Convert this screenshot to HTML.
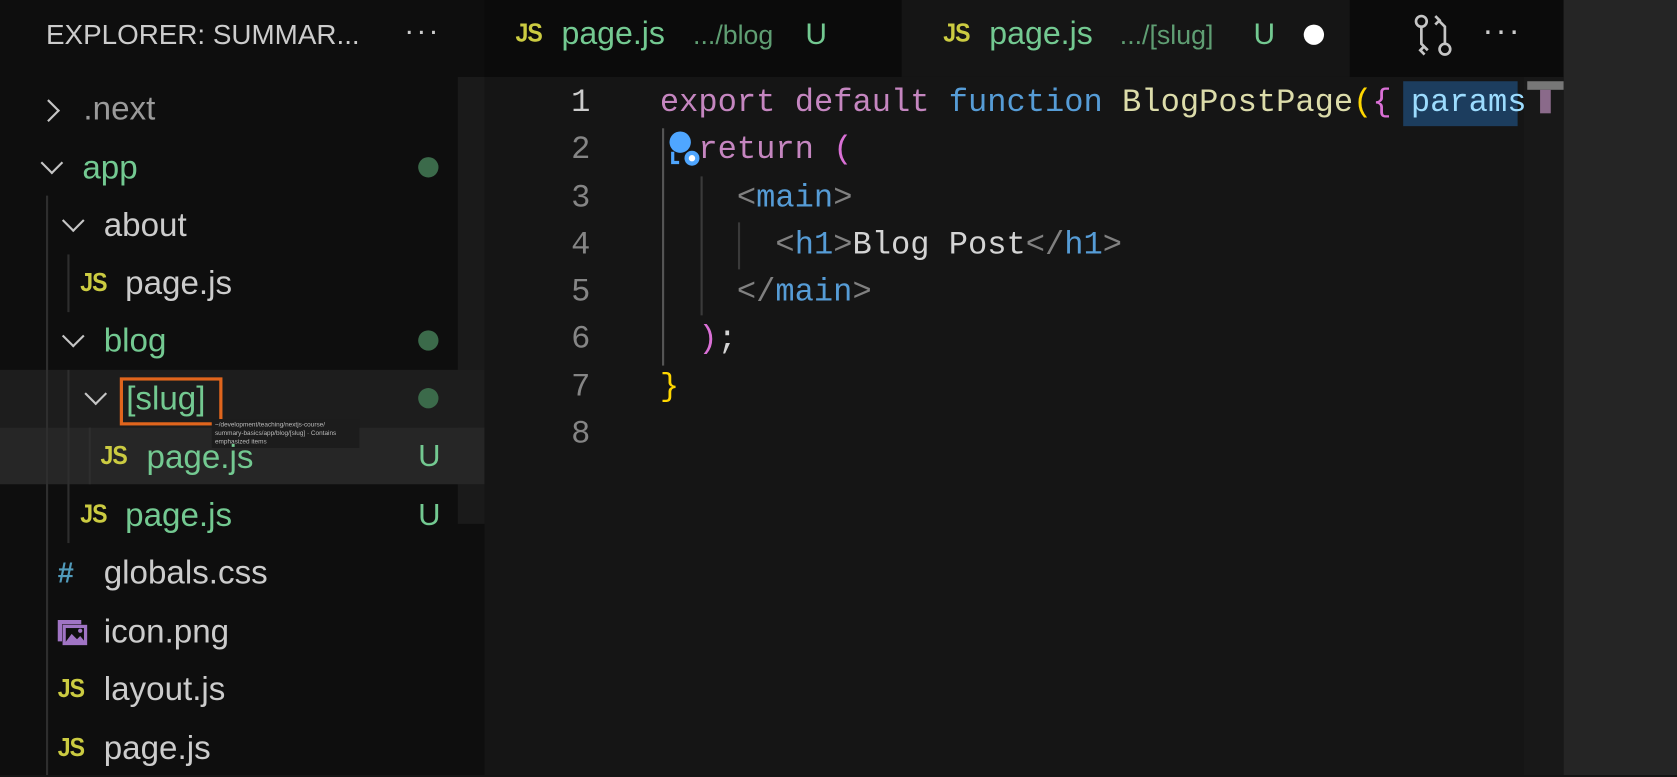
<!DOCTYPE html>
<html><head><meta charset="utf-8"><style>
html,body{margin:0;padding:0;background:#151515;overflow:hidden;width:1677px;height:775px}
#w{position:absolute;left:0;top:0;width:1568px;height:725px;transform:scale(1.0695,1.069);transform-origin:0 0;background:#151515;font-family:"Liberation Sans",sans-serif}
.a{position:absolute}
#side{left:0;top:0;width:453px;height:725px;background:#0e0e0e}
#tabs{left:453px;top:0;width:1009px;height:72px;background:#0b0b0b}
#right{left:1462px;top:0;width:106px;height:725px;background:#252525}
.t{position:absolute;font-size:31px;line-height:54px;white-space:nowrap;color:#cccccc}
.g{color:#73c991}
.js{position:absolute;font-size:24px;font-weight:bold;color:#cbcb41;line-height:54px;letter-spacing:-1px;transform:scaleX(0.9);transform-origin:0 0}
.chev{position:absolute;width:13px;height:13px;border-right:2px solid #c5c5c5;border-bottom:2px solid #c5c5c5}
.dot{position:absolute;width:19px;height:19px;border-radius:50%;background:#3b6a4a}
.u{position:absolute;font-size:29px;color:#73c991;line-height:54px}
.guide{position:absolute;width:2px;background:#2e2e2e}
.code{position:absolute;left:617px;font-family:"Liberation Mono",monospace;font-size:30px;line-height:44.3px;white-space:pre;color:#d4d4d4}
.ln{position:absolute;left:500px;width:52px;text-align:right;font-family:"Liberation Mono",monospace;font-size:30px;line-height:44.3px;color:#858585;white-space:pre}
.k{color:#c586c0}.b{color:#569cd6}.f{color:#dcdcaa}.y{color:#ffd700}.p{color:#da70d6}.gr{color:#808080}.c{color:#9cdcfe}
</style></head><body><div id="w">
<div class="a" id="side"></div>
<div class="a" id="tabs"></div>
<div class="a" id="right"></div>
<div class="a" style="left:428px;top:72px;width:25px;height:418px;background:#1a1a1a"></div>
<div class="a" style="left:0;top:346px;width:453px;height:54px;background:#1d1d1d"></div>
<div class="a" style="left:0;top:400px;width:453px;height:53px;background:#262626"></div>

<div class="t" style="left:43px;top:5px;font-size:26px;color:#cccccc">EXPLORER: SUMMAR...</div>
<div class="t" style="left:378px;top:2px;font-size:28px;letter-spacing:2px">···</div>

<div class="guide" style="left:43px;top:183px;height:542px"></div>
<div class="guide" style="left:63px;top:238px;height:54px"></div>
<div class="guide" style="left:63px;top:346px;height:162px"></div>
<div class="guide" style="left:83px;top:400px;height:53px"></div>

<div class="chev" style="left:38px;top:96px;transform:rotate(-45deg)"></div>
<div class="t" style="left:78px;top:75px;color:#9a9a9a">.next</div>

<div class="chev" style="left:41px;top:145px;transform:rotate(45deg)"></div>
<div class="t g" style="left:77px;top:130px">app</div><div class="dot" style="left:391px;top:147px"></div>

<div class="chev" style="left:61px;top:199px;transform:rotate(45deg)"></div>
<div class="t" style="left:97px;top:184px">about</div>

<div class="js" style="left:75px;top:238px">JS</div>
<div class="t" style="left:117px;top:238px">page.js</div>

<div class="chev" style="left:61px;top:307px;transform:rotate(45deg)"></div>
<div class="t g" style="left:97px;top:292px">blog</div><div class="dot" style="left:391px;top:309px"></div>

<div class="chev" style="left:82px;top:361px;transform:rotate(45deg)"></div>
<div class="a" style="left:112px;top:353px;width:90px;height:39px;border:3px solid #e0651d"></div>
<div class="t g" style="left:118px;top:346px">[slug]</div><div class="dot" style="left:391px;top:363px"></div>
<div class="a" style="left:198px;top:392px;width:138px;height:27px;background:#1c1c1c;color:#bbb;font-size:6px;line-height:8px;padding:2px 3px;box-sizing:border-box">~/development/teaching/nextjs-course/<br>summary-basics/app/blog/[slug] · Contains<br>emphasized items</div>

<div class="js" style="left:94px;top:400px">JS</div>
<div class="t g" style="left:137px;top:401px">page.js</div><div class="u" style="left:391px;top:400px">U</div>

<div class="js" style="left:75px;top:455px">JS</div>
<div class="t g" style="left:117px;top:455px">page.js</div><div class="u" style="left:391px;top:455px">U</div>

<div class="t" style="left:54px;top:509px;color:#519aba;font-weight:bold;font-size:27px">#</div>
<div class="t" style="left:97px;top:509px">globals.css</div>
<svg class="a" style="left:52px;top:578px" width="30" height="26" viewBox="0 0 30 26"><path d="M2 2h22v4H6v16H2z" fill="#a074c4"/><rect x="8" y="8" width="20" height="16" fill="none" stroke="#a074c4" stroke-width="3"/><path d="M9 23l6-8 5 5 3-3 5 6z" fill="#a074c4"/><circle cx="23" cy="12" r="2" fill="#a074c4"/></svg>
<div class="t" style="left:97px;top:564px">icon.png</div>
<div class="js" style="left:54px;top:618px">JS</div>
<div class="t" style="left:97px;top:618px">layout.js</div>
<div class="js" style="left:54px;top:673px">JS</div>
<div class="t" style="left:97px;top:673px">page.js</div>

<div class="a" style="left:843px;top:0;width:419px;height:72px;background:#151515"></div>
<div class="js" style="left:482px;top:5px">JS</div>
<div class="t g" style="left:525px;top:5px;font-size:30px">page.js</div>
<div class="t" style="left:648px;top:6px;font-size:25px;color:#5f9e73">.../blog</div>
<div class="t g" style="left:753px;top:5px;font-size:28px">U</div>
<div class="js" style="left:882px;top:5px">JS</div>
<div class="t g" style="left:925px;top:5px;font-size:30px">page.js</div>
<div class="t" style="left:1047px;top:6px;font-size:25px;color:#5f9e73">.../[slug]</div>
<div class="t g" style="left:1172px;top:5px;font-size:28px">U</div>
<div class="a" style="left:1219px;top:23px;width:19px;height:19px;border-radius:50%;background:#fff"></div>
<svg class="a" style="left:1320px;top:12px" width="40" height="42" viewBox="0 0 40 42" fill="none" stroke="#c5c5c5" stroke-width="2.5"><circle cx="9" cy="8" r="5"/><circle cx="31" cy="34" r="5"/><path d="M9 13v16l6 6M31 29V13l-6-6"/><path d="M22 3l4 4-4 4M12 31l-4 4 4 4"/></svg>
<div class="t" style="left:1386px;top:2px;letter-spacing:2px">···</div>

<div class="a" style="left:1425px;top:72px;width:37px;height:653px;background:#181818"></div>
<div class="a" style="left:1312px;top:76px;width:107px;height:42px;background:#1c3d5e"></div>
<div class="a" style="left:619px;top:120px;width:2px;height:222px;background:#555"></div>
<div class="a" style="left:655px;top:165px;width:2px;height:130px;background:#3a3a3a"></div>
<div class="a" style="left:690px;top:208px;width:2px;height:44px;background:#3a3a3a"></div>
<div class="ln" style="top:75px"><span style="color:#ccc">1</span>
2
3
4
5
6
7
8</div>
<div class="code" style="top:75px"><span class="k">export</span> <span class="k">default</span> <span class="b">function</span> <span class="f">BlogPostPage</span><span class="y">(</span><span class="p">{</span> <span class="c">params</span> <span class="p">}</span>
  <span class="k">return</span> <span class="p">(</span>
    <span class="gr">&lt;</span><span class="b">main</span><span class="gr">&gt;</span>
      <span class="gr">&lt;</span><span class="b">h1</span><span class="gr">&gt;</span>Blog Post<span class="gr">&lt;/</span><span class="b">h1</span><span class="gr">&gt;</span>
    <span class="gr">&lt;/</span><span class="b">main</span><span class="gr">&gt;</span>
  <span class="p">)</span>;
<span class="y">}</span></div>
<div class="a" style="left:1425px;top:72px;width:37px;height:40px;background:#181818"></div>
<div class="a" style="left:1428px;top:76px;width:34px;height:8px;background:#777"></div>
<div class="a" style="left:1440px;top:84px;width:10px;height:22px;background:#8a6a8a"></div>
<svg class="a" style="left:624px;top:122px" width="32" height="34" viewBox="0 0 32 34"><circle cx="12" cy="11" r="10" fill="#4fa6ff"/><path d="M5 20v10h6" stroke="#4fa6ff" stroke-width="3" fill="none"/><circle cx="23" cy="26" r="7" fill="#4fa6ff"/><circle cx="23" cy="26" r="3" fill="#fff"/></svg>
</div></body></html>
